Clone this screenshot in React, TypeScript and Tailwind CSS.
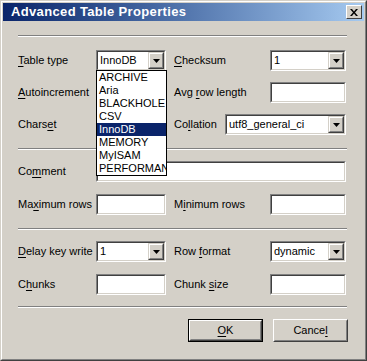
import React from "react";

const font = { fontFamily: '"Liberation Sans", Arial, sans-serif' };

function Label({ text, u, className = "" }: { text: string; u: number; className?: string }) {
  return (
    <span className={"text-[11px] leading-[13px] text-black whitespace-nowrap " + className}>
      {text.slice(0, u)}
      <span className="underline underline-offset-[2px]">{text[u]}</span>
      {text.slice(u + 1)}
    </span>
  );
}

function Sunken({ className = "", children }: { className?: string; children?: React.ReactNode }) {
  return (
    <div className={"border border-t-[#808080] border-l-[#808080] border-b-white border-r-white " + className}>
      <div className="h-full border border-t-[#404040] border-l-[#404040] border-b-[#d4d0c8] border-r-[#d4d0c8] bg-white flex items-center">
        {children}
      </div>
    </div>
  );
}

function Arrow() {
  return (
    <div className="ml-auto h-[17px] w-[16px] border border-t-[#d4d0c8] border-l-[#d4d0c8] border-b-[#404040] border-r-[#404040] bg-[#d4d0c8]">
      <div className="h-full border border-t-white border-l-white border-b-[#808080] border-r-[#808080] flex items-center justify-center">
        <svg width="7" height="4" viewBox="0 0 7 4">
          <path d="M0 0h7L3.5 4z" fill="#000" />
        </svg>
      </div>
    </div>
  );
}

function Select({ value, className = "" }: { value: string; className?: string }) {
  return (
    <Sunken className={"h-[21px] " + className}>
      <span className="pl-[2px] text-[11px] leading-[13px] text-black">{value}</span>
      <Arrow />
    </Sunken>
  );
}

function Input({ className = "" }: { className?: string }) {
  return <Sunken className={"h-[21px] " + className} />;
}

function Sep() {
  return (
    <div className="w-[329px]">
      <div className="h-px bg-[#808080]" />
      <div className="h-px bg-white" />
    </div>
  );
}

function Button({ text, u, def }: { text: string; u: number; def?: boolean }) {
  return (
    <div className={"h-[23px] w-[75px] " + (def ? "border border-black" : "")}>
      <div className="h-full border border-t-white border-l-white border-b-[#404040] border-r-[#404040]">
        <div className="h-full border border-t-[#d4d0c8] border-l-[#d4d0c8] border-b-[#808080] border-r-[#808080] flex items-center justify-center">
          <Label text={text} u={u} />
        </div>
      </div>
    </div>
  );
}

const items = ["ARCHIVE", "Aria", "BLACKHOLE", "CSV", "InnoDB", "MEMORY", "MyISAM", "PERFORMANCE_SCHEMA"];

export default function App() {
  return (
    <div style={font} className="w-[367px] h-[361px] bg-[#d4d0c8] border border-t-[#d4d0c8] border-l-[#d4d0c8] border-b-[#404040] border-r-[#404040]">
      <div className="h-full border border-t-white border-l-white border-b-[#808080] border-r-[#808080] p-px flex flex-col">
        {/* title bar */}
        <div className="h-[18px] bg-gradient-to-r from-[#0a246a] to-[#a6caf0] flex items-center pl-[8px] pr-[2px]">
          <span className="text-[13px] font-bold text-white tracking-[0.35px] leading-[16px]">Advanced Table Properties</span>
          <div className="ml-auto h-[14px] w-[16px] border border-t-white border-l-white border-b-[#404040] border-r-[#404040] bg-[#d4d0c8] flex items-center justify-center">
            <svg width="8" height="7" viewBox="0 0 8 7">
              <path d="M0 0h2l2 2.5L6 0h2L5 3.5 8 7H6L4 4.5 2 7H0l3-3.5z" fill="#000" />
            </svg>
          </div>
        </div>

        <div className="pl-[15px] flex flex-col">
          <div className="mt-[14px]"><Sep /></div>

          {/* section 1 */}
          <div className="mt-[13px] flex flex-col gap-[11px]">
            <div className="flex items-center h-[21px]">
              <Label text="Table type" u={0} className="w-[78px]" />
              <div className="relative">
                <Select value="InnoDB" className="w-[70px]" />
                <div className="absolute left-0 top-[20px] w-[71px] h-[106px] border border-black bg-white z-10 overflow-hidden">
                  {items.map((it) => (
                    <div
                      key={it}
                      className={
                        "h-[13px] pl-[2px] text-[11px] leading-[13px] whitespace-nowrap " +
                        (it === "InnoDB" ? "bg-[#0a246a] text-white" : "text-black")
                      }
                    >
                      {it}
                    </div>
                  ))}
                </div>
              </div>
              <Label text="Checksum" u={0} className="ml-[8px] w-[96px]" />
              <Select value="1" className="w-[76px]" />
            </div>
            <div className="flex items-center h-[21px]">
              <Label text="Autoincrement" u={0} className="w-[78px]" />
              <Input className="w-[70px]" />
              <Label text="Avg row length" u={4} className="ml-[8px] w-[96px]" />
              <Input className="w-[76px]" />
            </div>
            <div className="flex items-center h-[21px]">
              <Label text="Charset" u={5} className="w-[78px]" />
              <Select value="" className="w-[70px]" />
              <Label text="Collation" u={2} className="ml-[8px] w-[51px]" />
              <Select value="utf8_general_ci" className="w-[121px]" />
            </div>
          </div>

          <div className="mt-[13px]"><Sep /></div>

          {/* section 2 */}
          <div className="mt-[11px] flex flex-col gap-[12px]">
            <div className="flex items-center h-[21px]">
              <Label text="Comment" u={2} className="w-[78px]" />
              <Input className="w-[250px]" />
            </div>
            <div className="flex items-center h-[21px]">
              <Label text="Maximum rows" u={2} className="w-[78px]" />
              <Input className="w-[70px]" />
              <Label text="Minimum rows" u={1} className="ml-[8px] w-[96px]" />
              <Input className="w-[76px]" />
            </div>
          </div>

          <div className="mt-[13px]"><Sep /></div>

          {/* section 3 */}
          <div className="mt-[11px] flex flex-col gap-[12px]">
            <div className="flex items-center h-[21px]">
              <Label text="Delay key write" u={0} className="w-[78px]" />
              <Select value="1" className="w-[70px]" />
              <Label text="Row format" u={4} className="ml-[8px] w-[96px]" />
              <Select value="dynamic" className="w-[76px]" />
            </div>
            <div className="flex items-center h-[21px]">
              <Label text="Chunks" u={1} className="w-[78px]" />
              <Input className="w-[70px]" />
              <Label text="Chunk size" u={6} className="ml-[8px] w-[96px]" />
              <Input className="w-[76px]" />
            </div>
          </div>

          <div className="mt-[11px]"><Sep /></div>

          <div className="mt-[11px] flex gap-[10px] pl-[170px]">
            <Button text="OK" u={0} def />
            <Button text="Cancel" u={5} />
          </div>
        </div>
      </div>
    </div>
  );
}
